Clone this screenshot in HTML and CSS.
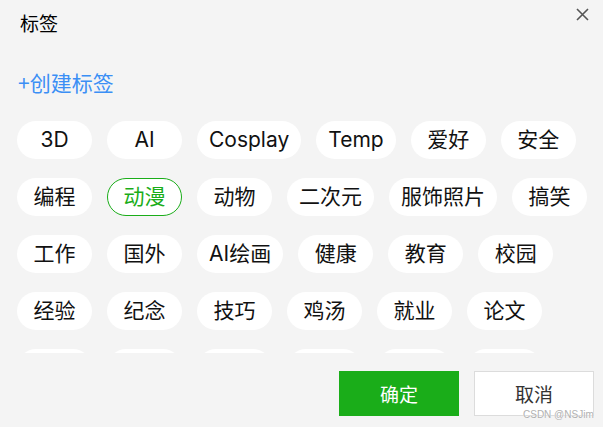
FILE: index.html
```html
<!DOCTYPE html>
<html lang="zh-CN">
<head>
<meta charset="utf-8">
<title>标签</title>
<link rel="stylesheet" href="styles.css">
</head>
<body>
<div class="dialog">
  <div class="header">
    <span class="title">标签</span>
    <button class="close" aria-label="关闭">
      <svg width="13" height="13" viewBox="0 0 13 13"><path d="M1 1 L12 12 M12 1 L1 12" stroke="#555" stroke-width="1.6" fill="none"/></svg>
    </button>
  </div>
  <div class="create">+创建标签</div>
  <div class="tags">
    <span class="tag">3D</span>
    <span class="tag">AI</span>
    <span class="tag">Cosplay</span>
    <span class="tag">Temp</span>
    <span class="tag">爱好</span>
    <span class="tag">安全</span>
    <span class="tag">编程</span>
    <span class="tag active">动漫</span>
    <span class="tag">动物</span>
    <span class="tag">二次元</span>
    <span class="tag">服饰照片</span>
    <span class="tag">搞笑</span>
    <span class="tag">工作</span>
    <span class="tag">国外</span>
    <span class="tag">AI绘画</span>
    <span class="tag">健康</span>
    <span class="tag">教育</span>
    <span class="tag">校园</span>
    <span class="tag">经验</span>
    <span class="tag">纪念</span>
    <span class="tag">技巧</span>
    <span class="tag">鸡汤</span>
    <span class="tag">就业</span>
    <span class="tag">论文</span>
    <span class="tag"></span>
    <span class="tag"></span>
    <span class="tag"></span>
    <span class="tag"></span>
    <span class="tag"></span>
    <span class="tag"></span>
  </div>
  <div class="footer">
    <button class="btn btn-ok">确定</button>
    <button class="btn btn-cancel">取消</button>
  </div>
  <div class="watermark">CSDN @NSJim</div>
</div>
</body>
</html>
```
FILE: styles.css
```css
html, body {
  margin: 0;
  padding: 0;
  background: #f4f4f4;
}
.dialog {
  position: relative;
  width: 603px;
  height: 427px;
  display: flex;
  flex-direction: column;
  font-family: "Inter", "Noto Sans CJK SC", sans-serif;
  overflow: hidden;
}
.header {
  height: 46px;
  padding-left: 20px;
}
.title {
  font-family: "Noto Sans CJK SC", sans-serif;
  font-size: 19px;
  line-height: 46px;
  color: #000;
}
.close {
  position: absolute;
  left: 576px;
  top: 8px;
  width: 13px;
  height: 13px;
  padding: 0;
  border: 0;
  background: none;
  display: block;
}
.close svg { display: block; }
.create {
  margin-top: 22px;
  padding-left: 18px;
  font-family: "Noto Sans CJK SC", sans-serif;
  font-size: 21px;
  line-height: 28px;
  color: #3b8ff5;
}
.tags {
  margin-top: 25px;
  height: 232px;
  overflow: hidden;
  padding: 0 5px 0 17px;
  display: flex;
  flex-wrap: wrap;
  align-content: flex-start;
  column-gap: 15px;
  row-gap: 19px;
}
.tag {
  box-sizing: border-box;
  height: 38px;
  min-width: 75px;
  padding: 0 12px;
  border-radius: 19px;
  background: #fff;
  font-size: 21px;
  line-height: 38px;
  color: #111;
  text-align: center;
  white-space: nowrap;
}
.tag.active {
  border: 1.5px solid #1aad19;
  line-height: 35px;
  color: #1aad19;
}
.footer {
  margin-top: 18px;
  padding-right: 9px;
  display: flex;
  justify-content: flex-end;
  gap: 15px;
}
.btn {
  box-sizing: border-box;
  width: 120px;
  height: 45px;
  font-family: "Noto Sans CJK SC", sans-serif;
  font-size: 19px;
  padding: 0;
  border: 0;
}
.btn-ok {
  background: #1aad19;
  color: #fff;
}
.btn-cancel {
  background: #fff;
  border: 1px solid #dcdcdc;
  color: #333;
}
.watermark {
  position: absolute;
  left: 523px;
  top: 409px;
  font-family: "Liberation Sans", sans-serif;
  font-size: 10px;
  line-height: 12px;
  color: #b0b0b0;
  text-shadow: 0 0 1px #fff, 0 0 1px #fff;
}
```
